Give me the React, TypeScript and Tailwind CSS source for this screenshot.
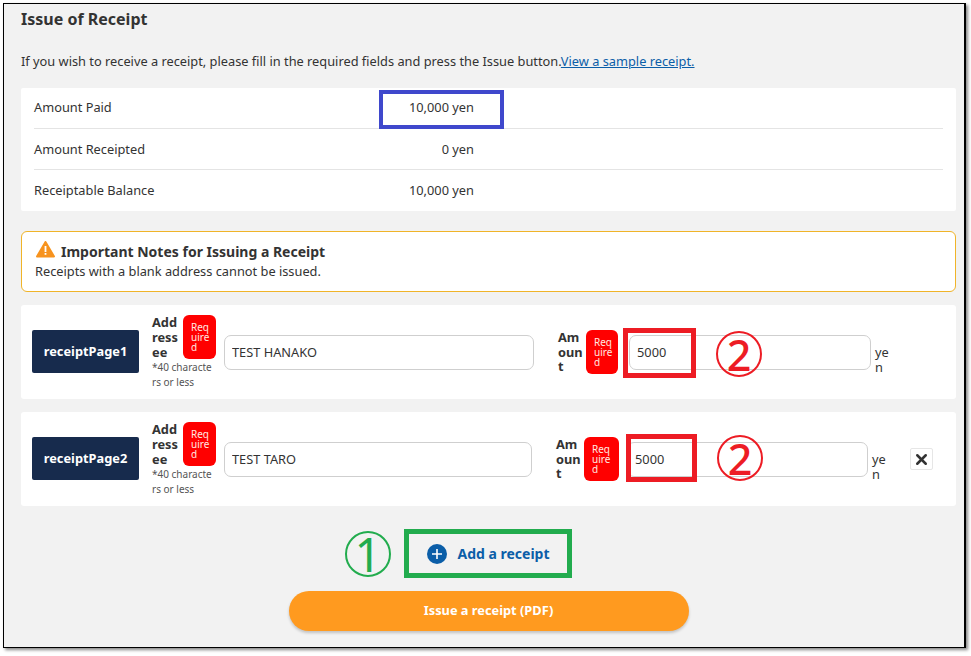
import { X } from "lucide-react";

// Summary rows on top of the form
const SUMMARY = [
  { label: "Amount Paid", value: "10,000 yen" },
  { label: "Amount Receipted", value: "0 yen" },
  { label: "Receiptable Balance", value: "10,000 yen" },
];

function RequiredBadge({ className }: { className: string }) {
  return (
    <span className={`flex h-[44px] shrink-0 items-center rounded-[6px] bg-[#ff0000] pr-[5px] pl-[8px] text-[10px] leading-[10px] break-all text-[#ffe9e0] ${className}`}>
      Required
    </span>
  );
}

interface RowProps {
  name: string;
  addressee: string;
  second?: boolean;
}

function ReceiptRow({ name, addressee, second }: RowProps) {
  return (
    <div className="flex h-[94px] items-center rounded-[3px] bg-white pl-[11px]">
      <div className="mb-[1px] flex h-[43px] w-[107px] shrink-0 items-center justify-center rounded-[2px] bg-[#172b4d] text-[12.8px] font-bold text-white">
        {name}
      </div>
      <div className="mt-[1px] ml-[13px] w-[64px] shrink-0">
        <div className="flex items-center gap-[3px]">
          <div className="w-[28px] shrink-0 text-[12.8px] leading-[14.7px] font-bold break-all text-[#333]">Addressee</div>
          <RequiredBadge className="w-[33px]" />
        </div>
        <div className="w-[60px] text-[10px] leading-[15px] break-all text-[#555]">*40 characters or less</div>
      </div>
      <input
        readOnly
        value={addressee}
        className={`ml-[8px] h-[35px] rounded-[7px] border border-[#cfcfcf] bg-white px-[7px] text-[12.8px] text-[#333] outline-none ${second ? "w-[308px]" : "w-[310px]"}`}
      />
      <div className="ml-[24px] w-[28px] shrink-0 text-[12.8px] leading-[14.7px] font-bold break-all text-[#333]">Amount</div>
      <RequiredBadge className={second ? "w-[35px]" : "w-[32px]"} />
      <input
        readOnly
        value="5000"
        className={`h-[35px] rounded-[7px] border border-[#cfcfcf] bg-white px-[7px] text-[12.8px] text-[#333] outline-none ${second ? "ml-[8px] w-[241px]" : "ml-[11px] w-[242px]"}`}
      />
      <div className="mt-[16px] ml-[4px] w-[16px] shrink-0 text-[12.8px] leading-[14.7px] break-all text-[#333]">yen</div>
      {second && (
        <div className="ml-[22px] flex h-[22px] w-[23px] items-center justify-center rounded-[2px] border border-[#e6e6e6] bg-white">
          <X size={17} strokeWidth={3.5} className="text-[#333]" />
        </div>
      )}
    </div>
  );
}

export default function App() {
  return (
    <div className="relative h-[656px] w-[971px] overflow-hidden bg-white font-['Noto_Sans',sans-serif] text-[#333]">
      <div className="mt-[3px] ml-[3px] h-[645px] w-[963px] border border-r-2 border-black bg-[#f2f2f2] pr-[8px] pl-[17px] shadow-[2px_2px_3px_#888]">
        <h1 className="mt-[3px] text-[16px] leading-[24px] font-bold">Issue of Receipt</h1>
        <p className="mt-[20px] text-[12.8px] leading-[20px]">
          If you wish to receive a receipt, please fill in the required fields and press the Issue button.
          <span className="text-[#0b5ea8] underline">View a sample receipt.</span>
        </p>

        <div className="mt-[17px] rounded-[2px] bg-white px-[13px]">
          {SUMMARY.map((s, i) => (
            <div key={s.label} className={`flex h-[41px] items-center text-[12.8px] ${i === 1 ? "pt-[1px]" : ""} ${i < 2 ? "border-b border-[#e4e4e4]" : ""}`}>
              <span className="w-[300px]">{s.label}</span>
              <span className="w-[140px] text-right">{s.value}</span>
            </div>
          ))}
        </div>

        <div className="mt-[20px] h-[61px] rounded-[6px] border border-[#f0b429] bg-white px-[13px] pt-[9px]">
          <div className="flex items-center">
            <svg width="19" height="17" viewBox="0 0 19 17" className="mt-[-5px] ml-[1px]">
              <path d="M9.5 1 L18 15.5 H1 Z" fill="#f7931e" stroke="#f7931e" strokeWidth="2" strokeLinejoin="round" />
              <rect x="8.6" y="5" width="1.8" height="6" fill="#fff" />
              <rect x="8.6" y="12" width="1.8" height="1.8" fill="#fff" />
            </svg>
            <span className="ml-[6px] text-[14px] leading-[22px] font-bold">Important Notes for Issuing a Receipt</span>
          </div>
          <p className="text-[12.8px] leading-[16px]">Receipts with a blank address cannot be issued.</p>
        </div>

        <div className="mt-[13px] flex flex-col gap-[13px]">
          <ReceiptRow name="receiptPage1" addressee="TEST HANAKO" />
          <ReceiptRow name="receiptPage2" addressee="TEST TARO" second />
        </div>

        <div className="mt-[23px] flex flex-col items-center">
          <div className="flex h-[49px] items-center gap-[10px] text-[14px] font-bold text-[#0b5ea8]">
            <span className="flex h-[20px] w-[20px] items-center justify-center rounded-full bg-[#0b5ea8]">
              <svg width="12" height="12" viewBox="0 0 12 12">
                <path d="M6 1v10M1 6h10" stroke="#fff" strokeWidth="1.6" />
              </svg>
            </span>
            Add a receipt
          </div>
          <button className="mt-[13px] h-[40px] w-[400px] rounded-full bg-[#ff9a1f] text-[12.8px] font-bold text-white shadow-[0_2px_3px_rgba(0,0,0,0.2)]">
            Issue a receipt (PDF)
          </button>
        </div>
      </div>

      {/* annotations painted over the screenshot */}
      <div className="absolute top-[90px] left-[379px] h-[39px] w-[125px] border-4 border-[#3f48cc]" />
      <div className="absolute top-[328px] left-[623px] h-[50px] w-[73px] border-[5px] border-[#ed1c24]" />
      <div className="absolute top-[434px] left-[626px] h-[48px] w-[71px] border-[5px] border-[#ed1c24]" />
      <div className="absolute top-[529px] left-[404px] h-[49px] w-[168px] border-[5px] border-[#22ac4e]" />
      <div className="absolute top-[331px] left-[716px] flex h-[46px] w-[46px] items-center justify-center rounded-full border-2 border-[#ed1c24] text-[43px] leading-none font-medium text-[#ed1c24]">2</div>
      <div className="absolute top-[435px] left-[717px] flex h-[46px] w-[46px] items-center justify-center rounded-full border-2 border-[#ed1c24] text-[43px] leading-none font-medium text-[#ed1c24]">2</div>
      <div className="absolute top-[531px] left-[345px] flex h-[46px] w-[46px] items-center justify-center rounded-full border-2 border-[#22ac4e] text-[47px] leading-none text-[#22ac4e]">1</div>
    </div>
  );
}
